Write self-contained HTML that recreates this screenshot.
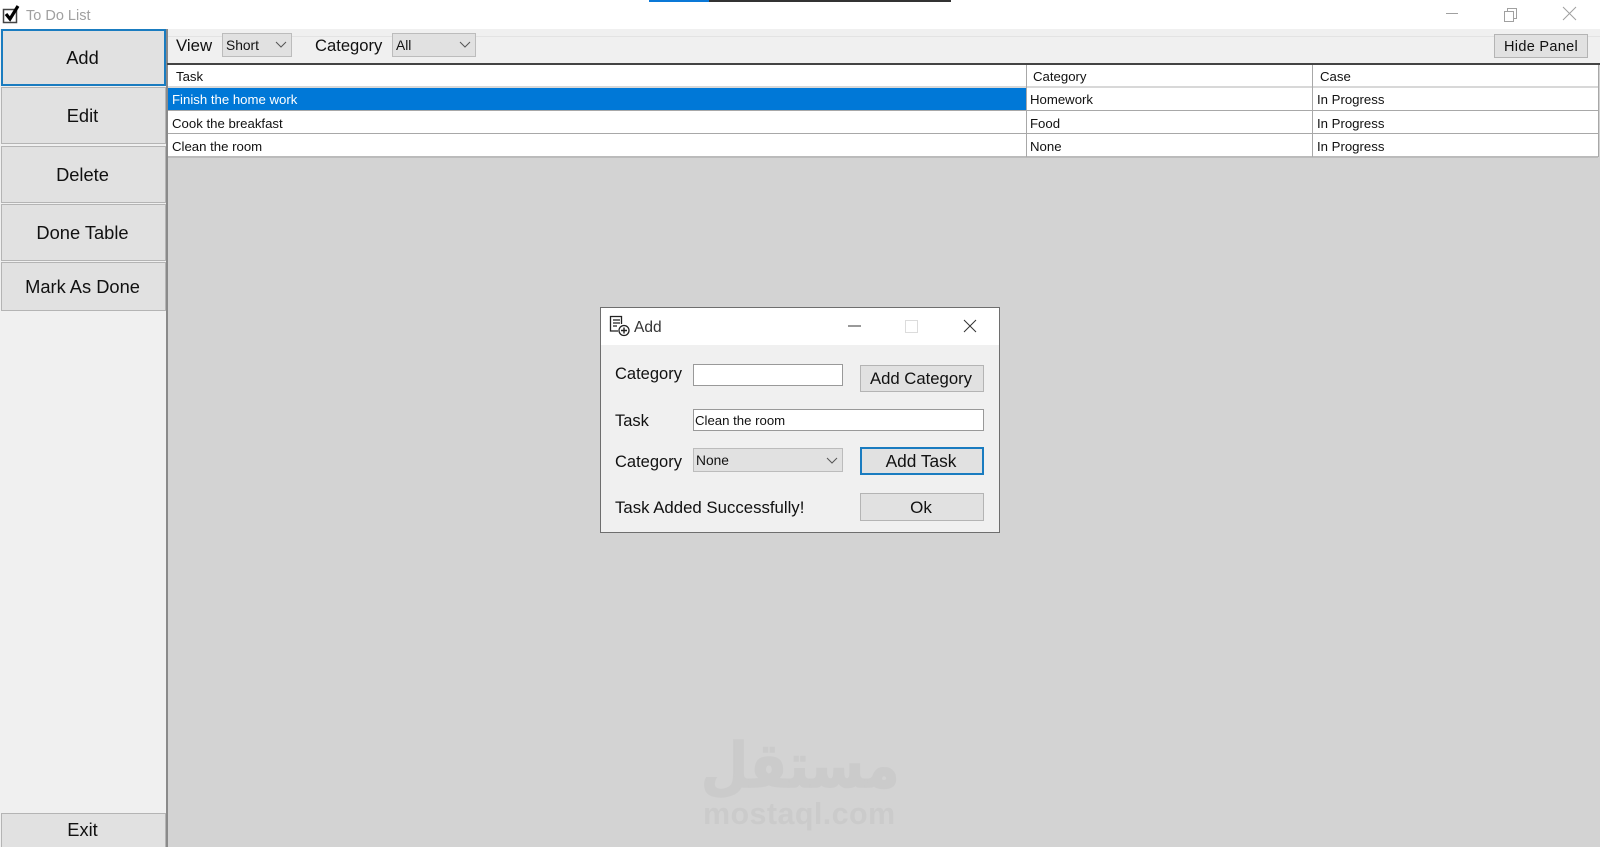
<!DOCTYPE html>
<html><head><meta charset="utf-8"><style>
html,body{margin:0;padding:0;width:1600px;height:847px;overflow:hidden;background:#fff}
body{position:relative;font-family:"Liberation Sans",sans-serif;color:#111}
div,svg{position:absolute;box-sizing:border-box}
.t{white-space:nowrap;line-height:1}
.b{background:#e1e1e1;border:1px solid #b4b4b4;display:flex;align-items:center;justify-content:center;white-space:nowrap;color:#111}
.s{font-size:18.3px;padding-right:2px}
.c{font-size:13.2px;white-space:nowrap;line-height:1}
.h{height:1px;background:#a8a8a8}
.v{width:1px;background:#a8a8a8}
.cb{background:#e1e1e1;border:1px solid #bcbcbc;font-size:13.8px}
.d{font-size:17px;padding-right:2px}
.l{font-size:16.500px}
</style></head><body>
<!-- top strip -->
<div style="left:649px;top:0;width:60px;height:2px;background:#0a78d7"></div>
<div style="left:709px;top:0;width:242px;height:2px;background:#333"></div>
<!-- title bar -->
<svg style="left:2px;top:4px" width="20" height="20" viewBox="0 0 20 20"><path d="M1.500 5.500h13v13h-13z" fill="#fff" stroke="#444" stroke-width="1.500"/><path d="M4 10l4 5L16 2" fill="none" stroke="#000" stroke-width="3.200"/></svg>
<div class="t" style="left:26px;top:9px;font-size:14.500px;color:#a0a0a0">To Do List</div>
<svg style="left:1440px;top:4px" width="160" height="22" viewBox="0 0 160 22" fill="none" stroke="#a0a0a0" stroke-width="1"><path d="M6 9.500h12"/><path d="M64.500 7.500h9v10h-9zM67.500 7.500v-3h9v10h-3"/><path d="M123 3l13 13M136 3l-13 13"/></svg>
<!-- side panel -->
<div style="left:0;top:29px;width:166px;height:818px;background:#f0f0f0"></div>
<div style="left:166px;top:29px;width:2px;height:818px;background:#8a8a8a"></div>
<div class="b s" style="left:1px;top:29px;width:165px;height:57px;border:2px solid #1a7cc0">Add</div>
<div class="b s" style="left:1px;top:87px;width:165px;height:57px">Edit</div>
<div class="b s" style="left:1px;top:146px;width:165px;height:57px">Delete</div>
<div class="b s" style="left:1px;top:204px;width:165px;height:57px">Done Table</div>
<div class="b s" style="left:1px;top:262px;width:165px;height:49px">Mark As Done</div>
<div class="b s" style="left:1px;top:813px;width:165px;height:40px;padding-bottom:6px">Exit</div>
<!-- toolbar -->
<div style="left:168px;top:29px;width:1432px;height:35px;background:#f0f0f0"></div>
<div style="left:168px;top:36px;width:1432px;height:1px;background:#e3e3e3"></div>
<div class="t" style="left:176px;top:38px;font-size:16.800px">View</div>
<div class="cb" style="left:222px;top:33px;width:70px;height:24px"><div class="t" style="left:3px;top:5px">Short</div><svg style="left:52px;top:7px" width="12" height="8"><path d="M1 1l5 5 5-5" fill="none" stroke="#555"/></svg></div>
<div class="t" style="left:315px;top:38px;font-size:16.600px">Category</div>
<div class="cb" style="left:392px;top:33px;width:84px;height:24px"><div class="t" style="left:3px;top:5px">All</div><svg style="left:66px;top:7px" width="12" height="8"><path d="M1 1l5 5 5-5" fill="none" stroke="#555"/></svg></div>
<div class="b" style="left:1494px;top:34px;width:94px;height:24px;font-size:14.500px;letter-spacing:.3px;padding-top:2px">Hide Panel</div>
<!-- main area -->
<div style="left:168px;top:64px;width:1432px;height:783px;background:#d3d3d3"></div>
<!-- table -->
<div style="left:167px;top:63px;width:1433px;height:2px;background:#444"></div>
<div style="left:168px;top:65px;width:1430px;height:92px;background:#fff"></div>
<div style="left:168px;top:87px;width:859px;height:23px;background:#0078d7"></div>
<div class="h" style="left:168px;top:86px;width:1430px;background:#d8d8d8;height:2px"></div>
<div class="h" style="left:168px;top:110px;width:1430px"></div>
<div class="h" style="left:168px;top:133px;width:1430px"></div>
<div class="h" style="left:168px;top:156px;width:1430px;height:2px;background:#bbb"></div>
<div class="v" style="left:1026px;top:65px;height:92px"></div>
<div class="v" style="left:1312px;top:65px;height:92px"></div>
<div class="v" style="left:1598px;top:65px;height:92px"></div>
<div class="c" style="left:176px;top:70px">Task</div>
<div class="c" style="left:1033px;top:70px">Category</div>
<div class="c" style="left:1320px;top:70px">Case</div>
<div class="c" style="left:172px;top:93px;color:#fff">Finish the home work</div>
<div class="c" style="left:172px;top:117px">Cook the breakfast</div>
<div class="c" style="left:172px;top:140px">Clean the room</div>
<div class="c" style="left:1030px;top:93px">Homework</div>
<div class="c" style="left:1030px;top:117px">Food</div>
<div class="c" style="left:1030px;top:140px">None</div>
<div class="c" style="left:1317px;top:93px">In Progress</div>
<div class="c" style="left:1317px;top:117px">In Progress</div>
<div class="c" style="left:1317px;top:140px">In Progress</div>
<!-- watermark -->
<div class="t" style="left:676px;top:735px;width:200px;text-align:right;font-family:'DejaVu Sans',sans-serif;font-weight:bold;font-size:62px;color:#cbcbcb;-webkit-text-stroke:1.500px #cbcbcb;transform:scaleX(.875);transform-origin:right center" dir="ltr">مستقل</div>
<div class="t" style="left:703px;top:799px;font-weight:bold;font-size:30.500px;color:#cbcbcb;letter-spacing:.4px">mostaql.com</div>
<!-- dialog -->
<div style="left:600px;top:307px;width:400px;height:226px;background:#f0f0f0;border:1px solid #6e6e6e"></div>
<div style="left:601px;top:308px;width:398px;height:37px;background:#fff"></div>
<svg style="left:609px;top:315px" width="22" height="22" viewBox="0 0 22 22" fill="none" stroke="#222" stroke-width="1.300"><path d="M9 16H1.500V1.500h11V9"/><path d="M4 5h7M4 8h7M4 11h4"/><circle cx="15" cy="15.500" r="5"/><path d="M15 12.500v6M12 15.500h6" stroke-width="1.400"/></svg>
<div class="t" style="left:634px;top:320px;font-size:15.500px;color:#333">Add</div>
<svg style="left:840px;top:315px" width="145" height="22" viewBox="0 0 145 22" fill="none"><path d="M8 11h13" stroke="#333"/><path d="M65.500 5.500h12v12h-12z" stroke="#dcdcdc"/><path d="M124 5l12 12M136 5l-12 12" stroke="#333"/></svg>
<div class="t l" style="left:615px;top:366px">Category</div>
<div style="left:693px;top:364px;width:150px;height:22px;background:#fff;border:1px solid #999"></div>
<div class="b d" style="left:860px;top:365px;width:124px;height:27px;font-size:16.700px">Add Category</div>
<div class="t l" style="left:615px;top:413px">Task</div>
<div style="left:693px;top:409px;width:291px;height:22px;background:#fff;border:1px solid #999"></div>
<div class="t c" style="left:695px;top:414px">Clean the room</div>
<div class="t l" style="left:615px;top:454px">Category</div>
<div class="cb" style="left:693px;top:448px;width:150px;height:24px"><div class="t" style="left:2px;top:5px">None</div><svg style="left:132px;top:8px" width="12" height="8"><path d="M1 1l5 5 5-5" fill="none" stroke="#555"/></svg></div>
<div class="b d" style="left:860px;top:447px;width:124px;height:28px;border:2px solid #1a7cc0;padding-top:1px;font-size:17.300px">Add Task</div>
<div class="t" style="left:615px;top:500px;font-size:16.800px">Task Added Successfully!</div>
<div class="b d" style="left:860px;top:493px;width:124px;height:28px;padding-top:1px">Ok</div>
</body></html>
